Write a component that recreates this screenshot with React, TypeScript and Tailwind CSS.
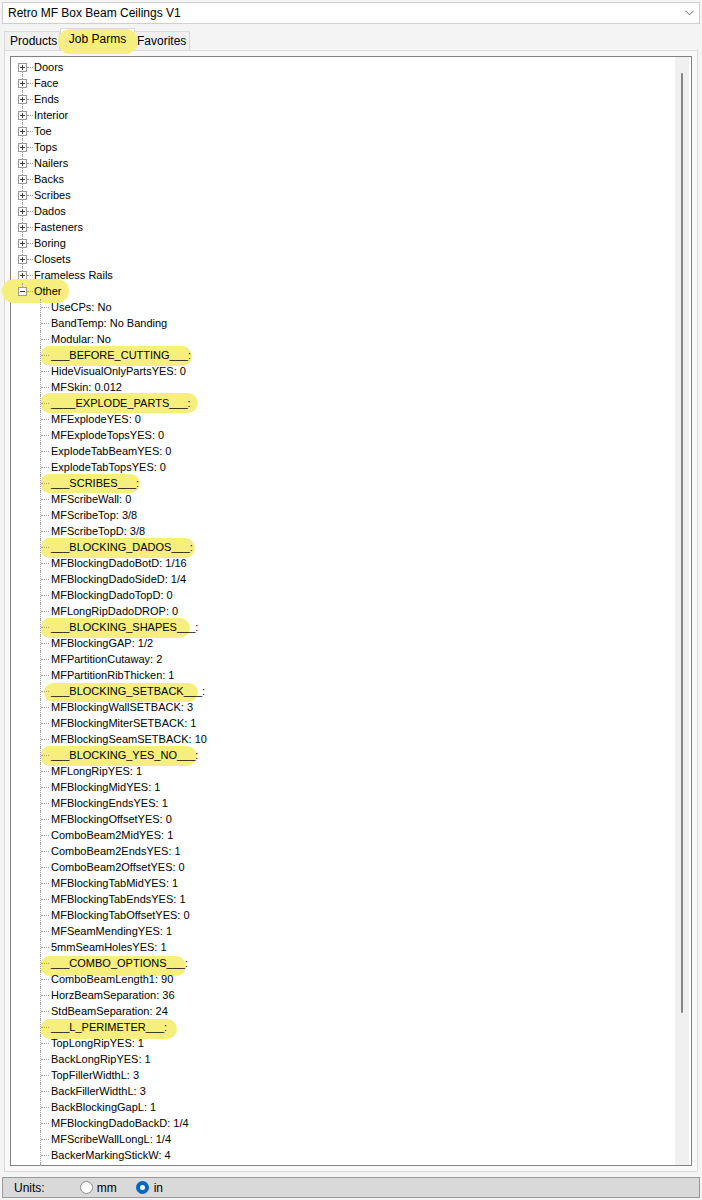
import React from "react";

const topItems = [
  "Doors",
  "Face",
  "Ends",
  "Interior",
  "Toe",
  "Tops",
  "Nailers",
  "Backs",
  "Scribes",
  "Dados",
  "Fasteners",
  "Boring",
  "Closets",
  "Frameless Rails",
  "Other",
];

const children = [
  "UseCPs: No",
  "BandTemp: No Banding",
  "Modular: No",
  "___BEFORE_CUTTING___:",
  "HideVisualOnlyPartsYES: 0",
  "MFSkin: 0.012",
  "____EXPLODE_PARTS___:",
  "MFExplodeYES: 0",
  "MFExplodeTopsYES: 0",
  "ExplodeTabBeamYES: 0",
  "ExplodeTabTopsYES: 0",
  "___SCRIBES___:",
  "MFScribeWall: 0",
  "MFScribeTop: 3/8",
  "MFScribeTopD: 3/8",
  "___BLOCKING_DADOS___:",
  "MFBlockingDadoBotD: 1/16",
  "MFBlockingDadoSideD: 1/4",
  "MFBlockingDadoTopD: 0",
  "MFLongRipDadoDROP: 0",
  "___BLOCKING_SHAPES___:",
  "MFBlockingGAP: 1/2",
  "MFPartitionCutaway: 2",
  "MFPartitionRibThicken: 1",
  "___BLOCKING_SETBACK___:",
  "MFBlockingWallSETBACK: 3",
  "MFBlockingMiterSETBACK: 1",
  "MFBlockingSeamSETBACK: 10",
  "___BLOCKING_YES_NO___:",
  "MFLongRipYES: 1",
  "MFBlockingMidYES: 1",
  "MFBlockingEndsYES: 1",
  "MFBlockingOffsetYES: 0",
  "ComboBeam2MidYES: 1",
  "ComboBeam2EndsYES: 1",
  "ComboBeam2OffsetYES: 0",
  "MFBlockingTabMidYES: 1",
  "MFBlockingTabEndsYES: 1",
  "MFBlockingTabOffsetYES: 0",
  "MFSeamMendingYES: 1",
  "5mmSeamHolesYES: 1",
  "___COMBO_OPTIONS___:",
  "ComboBeamLength1: 90",
  "HorzBeamSeparation: 36",
  "StdBeamSeparation: 24",
  "___L_PERIMETER___:",
  "TopLongRipYES: 1",
  "BackLongRipYES: 1",
  "TopFillerWidthL: 3",
  "BackFillerWidthL: 3",
  "BackBlockingGapL: 1",
  "MFBlockingDadoBackD: 1/4",
  "MFScribeWallLongL: 1/4",
  "BackerMarkingStickW: 4",
];

type HL = { left: number; top: number; width: number; height: number };

const childHighlights: Record<number, HL> = {
  3: { left: 29, top: -1, width: 152, height: 20 },
  6: { left: 29, top: -2, width: 158, height: 20 },
  11: { left: 29, top: -1, width: 100, height: 19 },
  15: { left: 29, top: -1, width: 155, height: 20 },
  20: { left: 29, top: -1, width: 150, height: 20 },
  24: { left: 33, top: 0, width: 154, height: 19 },
  28: { left: 29, top: -1, width: 157, height: 20 },
  41: { left: 29, top: 1, width: 146, height: 20 },
  45: { left: 29, top: 0, width: 137, height: 20 },
};

function Highlight({ hl }: { hl: HL }) {
  return (
    <span
      className="absolute rounded-full bg-[#f6ef7d]"
      style={{ left: hl.left, top: hl.top, width: hl.width, height: hl.height }}
    />
  );
}

function ExpandBox({ open }: { open: boolean }) {
  return (
    <svg
      width="9"
      height="9"
      viewBox="0 0 9 9"
      className="absolute left-[7px] top-[4px]"
    >
      <rect x="0.5" y="0.5" width="8" height="8" fill="#ffffff" stroke="#9a9a9a" />
      <line x1="2" y1="4.5" x2="7" y2="4.5" stroke="#3c3c3c" />
      {!open && <line x1="4.5" y1="2" x2="4.5" y2="7" stroke="#3c3c3c" />}
    </svg>
  );
}

function TopRow({ label, index }: { label: string; index: number }) {
  const last = index === topItems.length - 1;
  const first = index === 0;
  return (
    <div className="relative h-[16px]">
      {last && <Highlight hl={{ left: -9, top: -4, width: 67, height: 24 }} />}
      {first ? (
        <span className="absolute left-[11px] top-[8px] h-[8px] w-0 border-l border-dotted border-[#a0a0a0]" />
      ) : last ? (
        <span className="absolute left-[11px] top-0 h-[8px] w-0 border-l border-dotted border-[#a0a0a0]" />
      ) : (
        <span className="absolute left-[11px] top-0 h-[16px] w-0 border-l border-dotted border-[#a0a0a0]" />
      )}
      <span className="absolute left-[16px] top-[8px] h-0 w-[6px] border-t border-dotted border-[#a0a0a0]" />
      <ExpandBox open={last} />
      <span className="relative block pl-[23px] text-[11px] leading-[16px] whitespace-nowrap text-black">
        {label}
      </span>
    </div>
  );
}

function ChildRow({ label, index }: { label: string; index: number }) {
  const hl = childHighlights[index];
  return (
    <div className="relative h-[16px]">
      {hl && <Highlight hl={hl} />}
      <span className="absolute left-[29px] top-0 h-[16px] w-0 border-l border-dotted border-[#a0a0a0]" />
      <span className="absolute left-[30px] top-[8px] h-0 w-[8px] border-t border-dotted border-[#a0a0a0]" />
      <span className="relative block pl-[40px] text-[11px] leading-[16px] whitespace-nowrap text-black">
        {label}
      </span>
    </div>
  );
}

export default function App() {
  return (
    <div
      className="relative flex h-[1200px] w-[702px] flex-col bg-[#f4f4f4] text-black"
      style={{ fontFamily: '"Liberation Sans", Arial, sans-serif' }}
    >
      {/* Combobox */}
      <div className="mx-[2px] mt-[2px] flex h-[22px] items-center justify-between border border-[#cfcfcf] bg-white pl-[5px] pr-[5px] text-[12px]">
        <span>Retro MF Box Beam Ceilings V1</span>
        <svg width="9" height="6" viewBox="0 0 9 6">
          <polyline points="0.5,0.8 4.5,4.8 8.5,0.8" fill="none" stroke="#6a6a6a" strokeWidth="1" />
        </svg>
      </div>

      {/* Tabs */}
      <div className="mt-[4px] flex h-[22px] items-end pl-[4px] text-[12px]">
        <div className="flex h-[19px] w-[56px] items-center border border-b-0 border-[#dadada] bg-[#f0f0f0] pl-[5px]">
          Products
        </div>
        <div className="relative flex h-[22px] w-[75px] items-center justify-center border border-b-0 border-[#dadada] bg-white pb-[2px]">
          <span className="absolute left-[-3px] top-0 h-[25px] w-[80px] rounded-full bg-[#f6ef7d]" />
          <span className="relative">Job Parms</span>
        </div>
        <div className="flex h-[19px] w-[55px] items-center border border-b-0 border-l-0 border-[#dadada] bg-[#f0f0f0] pl-[2px]">
          Favorites
        </div>
      </div>

      {/* Tab page */}
      <div className="ml-[4px] h-[1122px] w-[694px] border border-[#dadada] bg-[#f9f9f9] p-[5px]">
        <div className="flex h-full w-full border border-[#828282] bg-white">
          <div className="flex flex-1 flex-col pt-[2px]">
            {topItems.map((t, i) => (
              <TopRow key={t} label={t} index={i} />
            ))}
            {children.map((c, i) => (
              <ChildRow key={c} label={c} index={i} />
            ))}
            <div className="relative flex-1">
              <span className="absolute left-[29px] top-0 h-full w-0 border-l border-dotted border-[#a0a0a0]" />
            </div>
          </div>
          {/* Scrollbar */}
          <div className="mr-[2px] flex w-[14px] flex-col items-center bg-[#f0f0f0] pt-[16px]">
            <div className="h-[940px] w-[2px] rounded-full bg-[#858585]" />
          </div>
        </div>
      </div>

      {/* Units bar */}
      <div className="mx-[2px] mt-[5px] flex h-[21px] items-center border border-[#9a9a9a] bg-[#d9d9d9] pl-[11px] text-[12px]">
        <span>Units:</span>
        <span className="ml-[35px] flex h-[13px] w-[13px] items-center justify-center rounded-full border border-[#8a8a8a] bg-white" />
        <span className="ml-[4px]">mm</span>
        <span className="ml-[19px] flex h-[13px] w-[13px] items-center justify-center rounded-full bg-[#0067c0]">
          <span className="h-[5px] w-[5px] rounded-full bg-white" />
        </span>
        <span className="ml-[5px]">in</span>
      </div>
    </div>
  );
}
